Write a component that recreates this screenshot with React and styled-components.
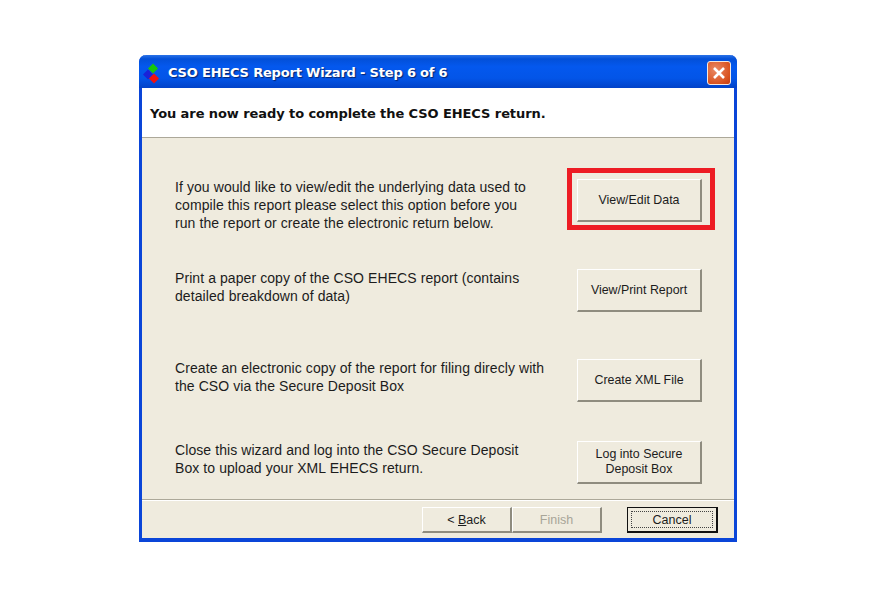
import React from 'react';
import styled, { createGlobalStyle } from 'styled-components';

const rows = [
  {
    text: ['If you would like to view/edit the underlying data used to', 'compile this report please select this option before you', 'run the report or create the electronic return below.'],
    button: ['View/Edit Data'],
    top: 41,
    highlighted: true,
  },
  {
    text: ['Print a paper copy of the CSO EHECS report (contains', 'detailed breakdown of data)'],
    button: ['View/Print Report'],
    top: 47,
  },
  {
    text: ['Create an electronic copy of the report for filing direcly with', 'the CSO via the Secure Deposit Box'],
    button: ['Create XML File'],
    top: 47,
  },
  {
    text: ['Close this wizard and log into the CSO Secure Deposit', 'Box to upload your XML EHECS return.'],
    button: ['Log into Secure', 'Deposit Box'],
    top: 39,
  },
];

export default function App() {
  return (
    <Page>
      <GlobalStyle />
      <Window>
        <TitleBar>
          <Logo width="20" height="22" viewBox="0 0 20 22">
            <polygon points="11,1.5 16,6.5 11,11.5 6,6.5" fill="#16c60c" />
            <polygon points="6,7.5 11,12.5 6,17.5 1,12.5" fill="#1a22d8" />
            <polygon points="12,11.5 17,16.5 12,21.5 7,16.5" fill="#ee1010" />
          </Logo>
          <Title>CSO EHECS Report Wizard - Step 6 of 6</Title>
          <CloseButton aria-label="Close">
            <svg width="14" height="14" viewBox="0 0 14 14">
              <path d="M2 2 L12 12 M12 2 L2 12" stroke="#fff" strokeWidth="2.6" />
            </svg>
          </CloseButton>
        </TitleBar>
        <Header>You are now ready to complete the CSO EHECS return.</Header>
        <Content>
          {rows.map((row) => (
            <Row key={row.button[0]} $top={row.top}>
              <RowText $highlighted={row.highlighted}>
                {row.text.map((line) => (
                  <div key={line}>{line}</div>
                ))}
              </RowText>
              <Button $highlighted={row.highlighted}>
                {row.button.map((line) => (
                  <div key={line}>{line}</div>
                ))}
              </Button>
            </Row>
          ))}
        </Content>
        <Footer>
          <NavGroup>
            <FooterButton>
              &lt; <u>B</u>ack
            </FooterButton>
            <FooterButton disabled>Finish</FooterButton>
          </NavGroup>
          <CancelButton>
            <FocusRing>Cancel</FocusRing>
          </CancelButton>
        </Footer>
      </Window>
    </Page>
  );
}

const GlobalStyle = createGlobalStyle`
  html, body {
    margin: 0;
    background: #ffffff;
  }
`;

const Page = styled.div`
  width: 877px;
  height: 598px;
  padding: 55px 0 0 139px;
  box-sizing: border-box;
  font-family: 'Liberation Sans', Arial, sans-serif;
`;

const Window = styled.div`
  width: 598px;
  height: 487px;
  box-sizing: border-box;
  display: flex;
  flex-direction: column;
  border: solid #0a45d8;
  border-width: 0 3px 4px 3px;
  border-radius: 7px 7px 0 0;
  background: #efebde;
`;

const TitleBar = styled.div`
  height: 33px;
  margin: 0 -3px;
  padding: 2px 6px 0 3px;
  box-sizing: border-box;
  display: flex;
  align-items: center;
  flex-shrink: 0;
  border-radius: 7px 7px 0 0;
  background: linear-gradient(#2a72e8 0%, #0350d8 12%, #0458ee 35%, #0355e8 70%, #0242c8 100%);
`;

const Logo = styled.svg`
  flex-shrink: 0;
  margin-right: 6px;
`;

const Title = styled.div`
  flex: 1;
  color: #ffffff;
  font-family: 'DejaVu Sans', Verdana, sans-serif;
  font-weight: 700;
  font-size: 13px;
  letter-spacing: -0.19px;
  text-shadow: 1px 1px 1px #06246e;
  white-space: nowrap;
`;

const CloseButton = styled.div`
  width: 24px;
  height: 24px;
  box-sizing: border-box;
  display: flex;
  align-items: center;
  justify-content: center;
  border: 1px solid #f4e8e0;
  border-radius: 3px;
  background: radial-gradient(circle at 35% 35%, #ea8a66, #d9521f 70%, #c43c12);
`;

const Header = styled.div`
  height: 50px;
  padding: 2px 0 0 8px;
  box-sizing: border-box;
  flex-shrink: 0;
  display: flex;
  align-items: center;
  background: #ffffff;
  border-bottom: 1px solid #aca899;
  font-family: 'DejaVu Sans', Verdana, sans-serif;
  font-weight: 700;
  font-size: 13px;
  letter-spacing: -0.08px;
  color: #111111;
  white-space: nowrap;
`;

const Content = styled.div`
  flex: 1;
  display: flex;
  flex-direction: column;
  border-bottom: 1px solid #aca899;
`;

const Row = styled.div`
  display: flex;
  align-items: flex-start;
  justify-content: space-between;
  height: 43px;
  margin-top: ${(p) => p.$top}px;
  padding: 0 32px 0 33px;
`;

const RowText = styled.div`
  margin-top: ${(p) => (p.$highlighted ? '-1px' : '0')};
  font-size: 14px;
  letter-spacing: 0.08px;
  line-height: 18px;
  color: #1c1c1c;
  white-space: nowrap;
`;

const Button = styled.div`
  position: relative;
  width: 125px;
  height: 43px;
  box-sizing: border-box;
  display: flex;
  flex-direction: column;
  align-items: center;
  justify-content: center;
  border-top: 1px solid #ffffff;
  border-left: 1px solid #ffffff;
  border-right: 2px solid #8f8c7f;
  border-bottom: 2px solid #8f8c7f;
  font-size: 12.4px;
  line-height: 15px;
  color: #1c1c1c;

  ${(p) =>
    p.$highlighted &&
    `
    &::after {
      content: '';
      position: absolute;
      inset: -12px -15px -10px -11px;
      border: 5px solid #ed1c24;
    }
  `}
`;

const Footer = styled.div`
  height: 38px;
  flex-shrink: 0;
  padding: 6px 16px 0 280px;
  box-sizing: border-box;
  display: flex;
  align-items: flex-start;
  justify-content: space-between;
  border-top: 1px solid #ffffff;
`;

const NavGroup = styled.div`
  display: flex;
`;

const FooterButton = styled.div`
  width: 90px;
  height: 26px;
  box-sizing: border-box;
  display: flex;
  align-items: center;
  justify-content: center;
  white-space: pre;
  border-top: 1px solid #ffffff;
  border-left: 1px solid #ffffff;
  border-right: 2px solid #8f8c7f;
  border-bottom: 2px solid #8f8c7f;
  font-size: 12.5px;
  color: ${(p) => (p.disabled ? '#a8a598' : '#1c1c1c')};
`;

const CancelButton = styled.div`
  width: 91px;
  height: 26px;
  padding: 3px;
  box-sizing: border-box;
  border: 1px solid #111111;
  border-right-width: 2px;
  border-bottom-width: 2px;
`;

const FocusRing = styled.div`
  height: 100%;
  box-sizing: border-box;
  display: flex;
  align-items: center;
  justify-content: center;
  border: 1px dotted #444444;
  font-size: 12.5px;
  color: #1c1c1c;
`;
